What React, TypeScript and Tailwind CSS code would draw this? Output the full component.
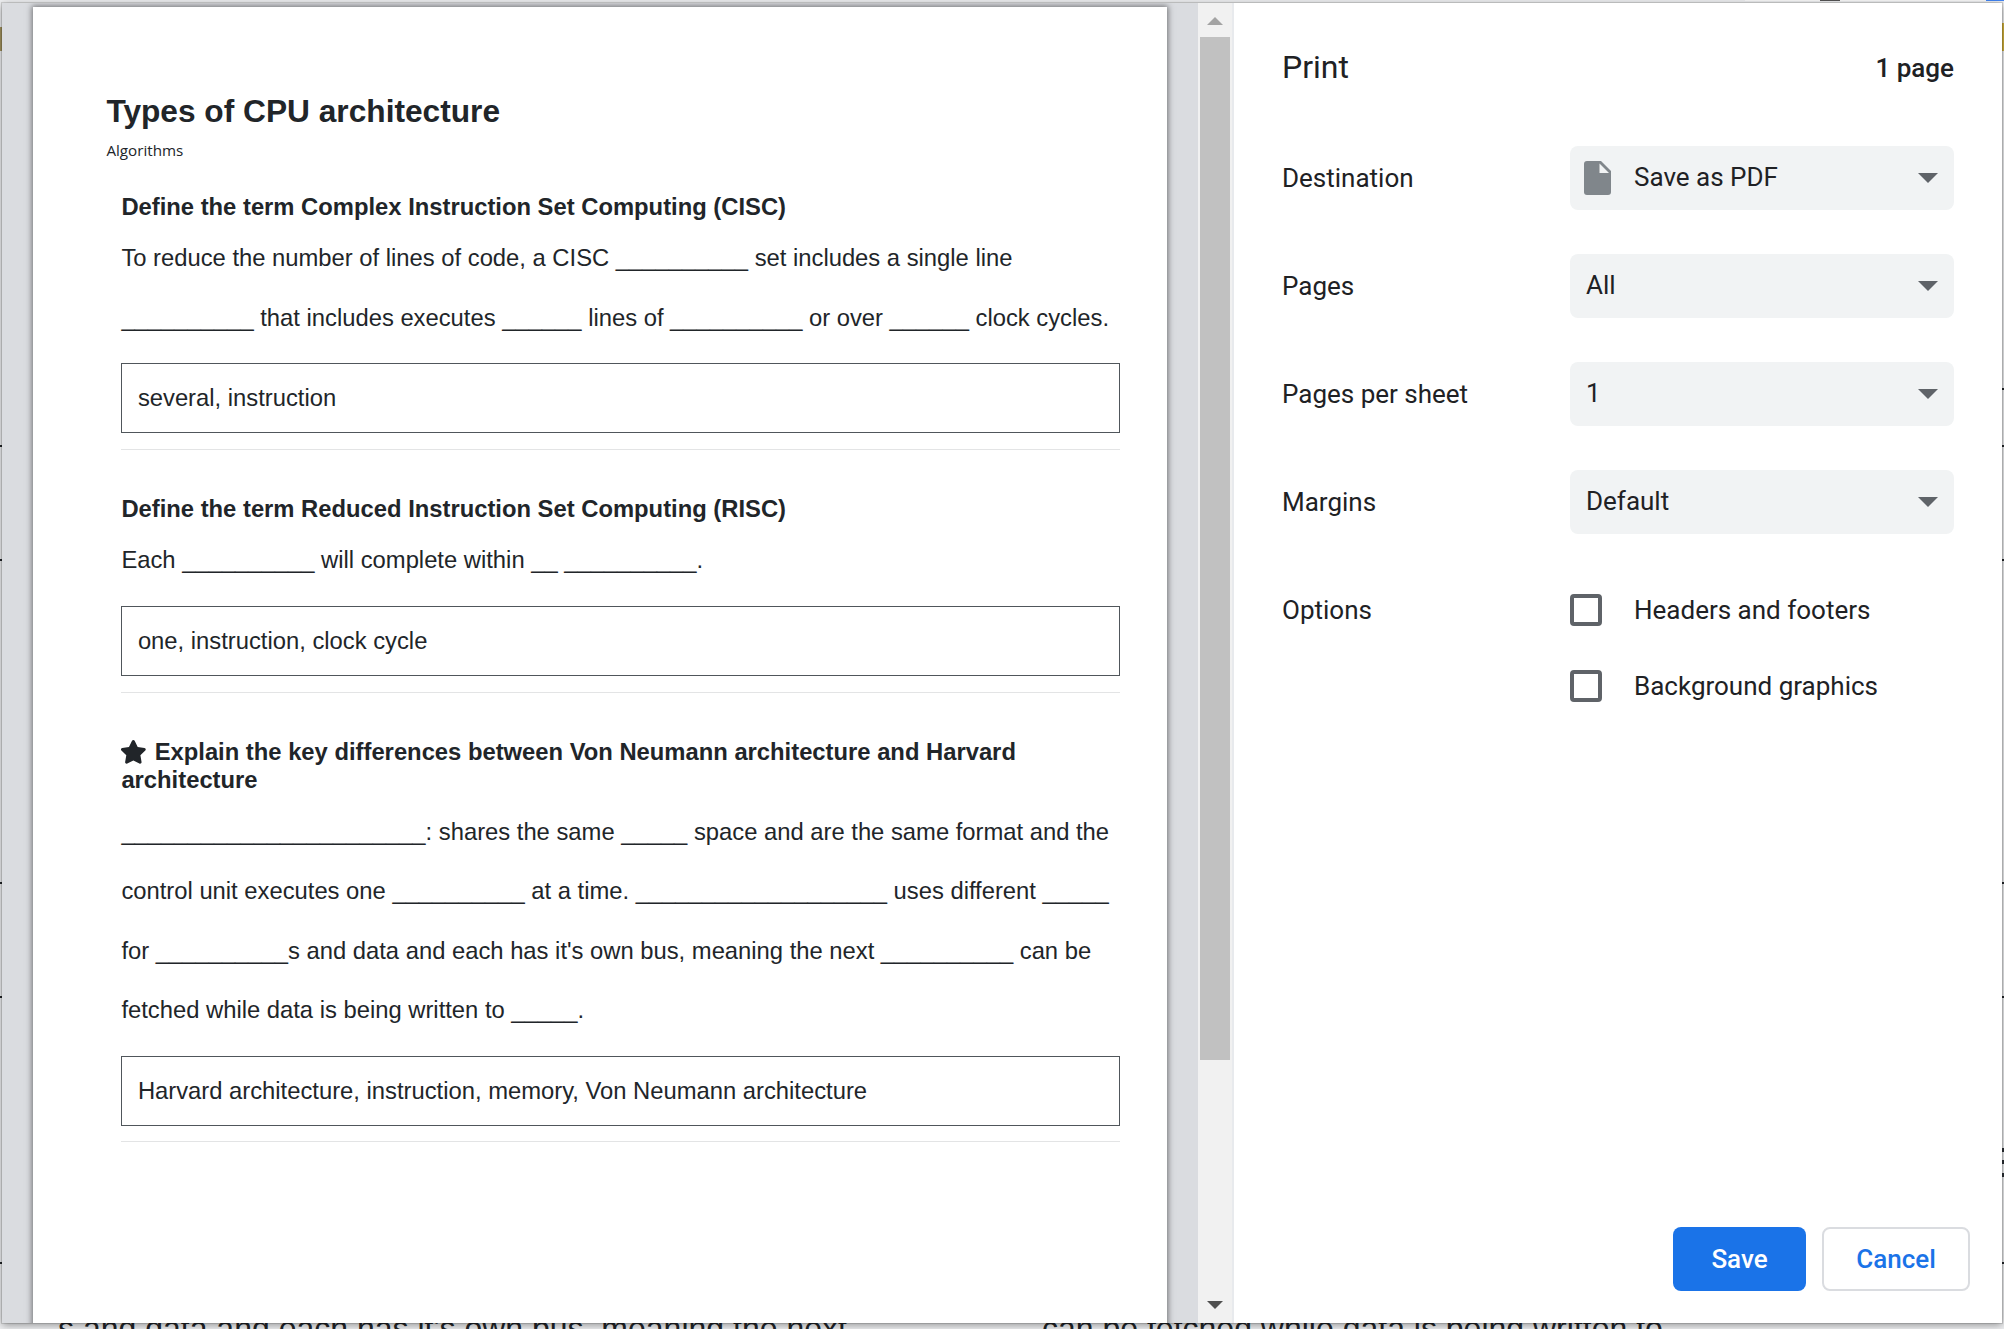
import React from 'react';

function Section({ title, star, lines, answer, gap }: { title: string[]; star?: boolean; lines: string[]; answer: string; gap?: boolean }) {
  return (
    <section className={gap ? 'mt-[45.3px]' : 'mt-[28px]'}>
      <h2 className="text-[23.79px] leading-[28.5px] font-bold whitespace-nowrap">
        {title.map((t, i) => (
          <div key={t} className="flex items-center">
            {star && i === 0 && (
              <svg viewBox="0 0 576 512" className="w-[26.7px] h-[23.76px] mr-[6.6px] relative -left-px" fill="#212529">
                <path d="M259.3 17.8L194 150.2 47.9 171.5c-26.200 3.800-36.700 36.100-17.700 54.600l105.700 103-25 145.500c-4.500 26.300 23.200 46 46.400 33.700L288 439.600l130.700 68.700c23.200 12.200 50.900-7.400 46.400-33.700l-25-145.500 105.700-103c19-18.500 8.500-50.800-17.700-54.600L382 150.200 316.700 17.800c-11.700-23.600-45.600-23.900-57.400 0z" />
              </svg>
            )}
            {t}
          </div>
        ))}
      </h2>
      <div className="mt-[6.8px] text-[23.79px] leading-[59.5px] whitespace-nowrap">
        {lines.map((l) => (
          <div key={l}>{l}</div>
        ))}
      </div>
      <div className="mt-[16.1px] h-[70px] border border-[#50565b] pl-[15.500px] text-[23.79px] leading-[68px]">{answer}</div>
      <div className="mt-[15.500px] h-px bg-[#e3e4e5]" />
    </section>
  );
}

function Caret() {
  return (
    <svg className="w-5 h-[10px]" viewBox="0 0 20 10">
      <path d="M0 0h20L10 10z" fill="#5f6368" />
    </svg>
  );
}

function Row({ label, value, file }: { label: string; value: string; file?: boolean }) {
  return (
    <div className="flex h-16 items-center">
      <div className="w-[288px]">{label}</div>
      <div className="flex h-16 w-[384px] items-center rounded-lg bg-[#f1f3f4] pl-4 pr-4">
        {file && (
          <svg className="-ml-0.5 mr-[23px] h-[34px] w-[27px]" viewBox="0 0 27 34">
            <path d="M3 0h14l10 10v21a3 3 0 0 1-3 3H3a3 3 0 0 1-3-3V3a3 3 0 0 1 3-3z" fill="#80868b" />
            <path d="M15.500 2.500v9.500h9.500z" fill="#f1f3f4" />
          </svg>
        )}
        <span className="relative -top-px flex-1">{value}</span>
        <Caret />
      </div>
    </div>
  );
}

function Check({ label }: { label: string }) {
  return (
    <div className="flex h-8 items-center">
      <div className="h-8 w-8 rounded-[4px] border-4 border-[#5f6368]" />
      <span className="ml-8">{label}</span>
    </div>
  );
}

export default function App() {
  return (
    <div className="relative h-[1329px] w-[2004px] overflow-hidden bg-[#eeeff1] font-['Liberation_Sans',sans-serif] text-[#212529]">
      <div className="absolute left-[1745px] top-0 h-px w-[259px] bg-[#fafafa]" />
      <div className="absolute left-[1820px] top-0 h-px w-5 bg-[#555]" />
      <div className="absolute left-[1986px] top-0 h-px w-[18px] bg-[#4285f4]" />
      <div className="absolute left-0 top-[27px] h-6 w-0.5 bg-[#a3945f]" />
      <div className="absolute right-0 top-[23px] h-7 w-0.5 bg-[#d2b13c]" />
      {[445, 559, 882, 996, 1262].map((y) => (
        <div key={y} className="absolute left-0 h-0.5 w-0.5 bg-[#212529]" style={{ top: y }} />
      ))}
      {[388, 445, 559, 882, 996, 1262].map((y) => (
        <div key={y} className="absolute right-0 h-0.5 w-0.5 bg-[#212529]" style={{ top: y }} />
      ))}
      <div className="absolute left-[58px] top-[1309px] text-[32px] leading-[38px] whitespace-nowrap">s and data and each has it&apos;s own bus, meaning the next</div>
      <div className="absolute left-[1042px] top-[1309px] text-[32px] leading-[38px] whitespace-nowrap">can be fetched while data is being written to</div>

      <div className="absolute left-0.5 top-[3px] flex h-[1320px] w-[2000px] overflow-hidden bg-white shadow-[0_2px_8px_rgba(0,0,0,0.4),0_0_0_1px_rgba(0,0,0,0.12)]">
        <div className="w-[1196px] overflow-hidden bg-[#dadce0] pl-[31px] pt-1">
          <main className="h-[1400px] w-[1134px] bg-white pt-[84px] pl-[73.400px] shadow-[0_0_6px_1px_rgba(0,0,0,0.5)]">
            <h1 className="text-[31.68px] leading-10 font-bold whitespace-nowrap">Types of CPU architecture</h1>
            <div className="mt-[7px] h-[27px] font-['Open_Sans',sans-serif] text-[15.200px] leading-[24px]">Algorithms</div>
            <div className="ml-[15px] w-[999px]">
              <Section
                title={['Define the term Complex Instruction Set Computing (CISC)']}
                lines={[
                  'To reduce the number of lines of code, a CISC __________ set includes a single line',
                  '__________ that includes executes ______ lines of __________ or over ______ clock cycles.',
                ]}
                answer="several, instruction"
              />
              <Section
                gap
                title={['Define the term Reduced Instruction Set Computing (RISC)']}
                lines={['Each __________ will complete within __ __________.']}
                answer="one, instruction, clock cycle"
              />
              <Section
                gap
                star
                title={['Explain the key differences between Von Neumann architecture and Harvard', 'architecture']}
                lines={[
                  '_______________________: shares the same _____ space and are the same format and the',
                  'control unit executes one __________ at a time. ___________________ uses different _____',
                  "for __________s and data and each has it's own bus, meaning the next __________ can be",
                  'fetched while data is being written to _____.',
                ]}
                answer="Harvard architecture, instruction, memory, Von Neumann architecture"
              />
            </div>
          </main>
        </div>
        <div className="flex w-[34px] flex-col items-center bg-[#f1f1f1]">
          <svg className="mt-[14px] h-2 w-4" viewBox="0 0 16 8"><path d="M0 8h16L8 0z" fill="#a3a3a3" /></svg>
          <div className="mt-3 h-[1023px] w-[30px] bg-[#c1c1c1]" />
          <svg className="mt-auto mb-[14px] h-2 w-4" viewBox="0 0 16 8"><path d="M0 0h16L8 8z" fill="#505050" /></svg>
        </div>
        <aside className="flex flex-1 flex-col border-l-2 border-[#e8eaed] font-['Roboto',sans-serif] text-[26px] leading-[32px] text-[#202124]">
          <div className="flex h-[143px] justify-between pl-12 pr-12 pt-12">
            <h1 className="text-[32px]">Print</h1>
            <span className="relative top-px font-medium">1 page</span>
          </div>
          <div className="flex flex-col gap-11 pl-12">
            <Row label="Destination" value="Save as PDF" file />
            <Row label="Pages" value="All" />
            <Row label="Pages per sheet" value="1" />
            <Row label="Margins" value="Default" />
            <div className="flex pt-4">
              <div className="w-[288px]">Options</div>
              <div className="flex flex-col gap-11">
                <Check label="Headers and footers" />
                <Check label="Background graphics" />
              </div>
            </div>
          </div>
          <div className="mt-auto mb-8 mr-8 flex justify-end gap-4 font-medium">
            <button className="h-16 w-[133px] rounded-lg bg-[#1a73e8] text-white">Save</button>
            <button className="h-16 w-[148px] rounded-lg border-2 border-[#dadce0] text-[#1a73e8]">Cancel</button>
          </div>
        </aside>
      </div>
      {[1148, 1160, 1173].map((y) => (
        <div key={y} className="absolute right-0 h-1 w-0.5 bg-[#212529]" style={{ top: y }} />
      ))}
    </div>
  );
}
